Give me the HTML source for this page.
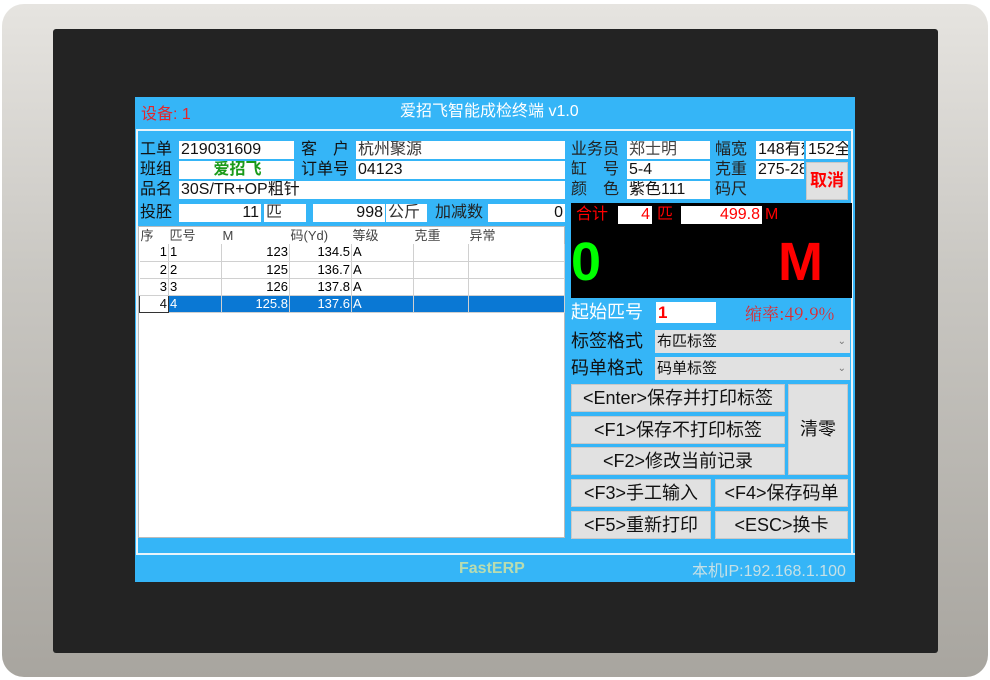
<!DOCTYPE html>
<html><head><meta charset="utf-8"><style>
*{margin:0;padding:0;box-sizing:border-box}
body{width:990px;height:680px;background:#fff;position:relative;overflow:hidden;font-family:"Liberation Sans","Noto Sans CJK SC",sans-serif}
.a{position:absolute}
.bz{left:2px;top:4px;width:986px;height:673px;border-radius:22px;background:linear-gradient(#e6e4e0,#c9c7c2 40%,#a8a59f);}
.blk{left:53px;top:29px;width:885px;height:624px;background:#232323;border-radius:3px}
.blue{background:#35b5f7}
.t{font-size:16px;line-height:18px;color:#111;white-space:nowrap}
.f{background:#fff;font-size:16px;line-height:18px;color:#111;padding-left:2px;white-space:nowrap;overflow:hidden}
.r{text-align:right;padding-right:2px}
.btn{background:#e1e1e1;border:1px solid #c8c8c8;font-size:18px;color:#111;text-align:center;white-space:nowrap}
table{border-collapse:collapse;font-size:13px}
td{border-right:1px solid #d0d0d0;border-bottom:1px solid #d0d0d0;height:17px;padding:0 1px;white-space:nowrap;line-height:16px}
</style></head><body>
<div class="a bz"></div>
<div class="a blk"></div>
<div class="a blue" style="left:135px;top:97px;width:720px;height:485px"></div>
<div class="a t" style="left:141px;top:106px;color:#e5262a;font-size:16px">设备: 1</div>
<div class="a t" style="left:400px;top:103px;color:#fff;font-size:16px">爱招飞智能成检终端 v1.0</div>
<div class="a" style="left:136px;top:129px;width:717px;height:426px;border:2px solid #e8f4fb;border-right:0"></div>
<div class="a" style="left:136px;top:553px;width:719px;height:2px;background:#e8f4fb"></div>
<div class="a" style="left:851px;top:129px;width:2px;height:426px;background:#e8f4fb"></div>

<div class="a t" style="left:140px;top:141px">工单</div>
<div class="a f" style="left:179px;top:141px;width:115px">219031609</div>
<div class="a t" style="left:301px;top:141px">客　户</div>
<div class="a f" style="left:356px;top:141px;width:209px;color:#333">杭州聚源</div>
<div class="a t" style="left:140px;top:161px">班组</div>
<div class="a f" style="left:179px;top:161px;width:115px;color:#1a9a1a;font-weight:bold;text-align:center">爱招飞</div>
<div class="a t" style="left:301px;top:161px">订单号</div>
<div class="a f" style="left:356px;top:161px;width:209px">04123</div>
<div class="a t" style="left:140px;top:181px">品名</div>
<div class="a f" style="left:179px;top:181px;width:386px">30S/TR+OP粗针</div>
<div class="a t" style="left:140px;top:204px">投胚</div>
<div class="a f r" style="left:179px;top:204px;width:82px">11</div>
<div class="a f" style="left:264px;top:204px;width:42px;color:#333">匹</div>
<div class="a f r" style="left:313px;top:204px;width:72px">998</div>
<div class="a f" style="left:386px;top:204px;width:41px;color:#333">公斤</div>
<div class="a t" style="left:435px;top:204px;color:#222">加减数</div>
<div class="a f r" style="left:488px;top:204px;width:77px">0</div>

<div class="a" style="left:138px;top:226px;width:427px;height:312px;background:#fff;border:1px solid #bbb">
<table style="width:426px">
<tr style="color:#444"><td style="width:29px;border:0">序</td><td style="width:53px;border:0">匹号</td><td style="width:68px;border:0">M</td><td style="width:62px;border:0">码(Yd)</td><td style="width:62px;border:0">等级</td><td style="width:55px;border:0">克重</td><td style="border:0">异常</td></tr>
<tr><td style="text-align:right">1</td><td>1</td><td style="text-align:right">123</td><td style="text-align:right">134.5</td><td>A</td><td></td><td></td></tr>
<tr><td style="text-align:right">2</td><td>2</td><td style="text-align:right">125</td><td style="text-align:right">136.7</td><td>A</td><td></td><td></td></tr>
<tr><td style="text-align:right">3</td><td>3</td><td style="text-align:right">126</td><td style="text-align:right">137.8</td><td>A</td><td></td><td></td></tr>
<tr style="background:#0a78d4;color:#fff"><td style="text-align:right;background:#fff;color:#111;border:1px solid #333">4</td><td>4</td><td style="text-align:right">125.8</td><td style="text-align:right">137.6</td><td>A</td><td></td><td></td></tr>
</table></div>

<div class="a t" style="left:571px;top:141px;color:#222">业务员</div>
<div class="a f" style="left:627px;top:141px;width:83px;color:#444">郑士明</div>
<div class="a t" style="left:715px;top:141px;color:#222">幅宽</div>
<div class="a f" style="left:756px;top:141px;width:48px">148有效</div>
<div class="a f" style="left:806px;top:141px;width:42px">152全</div>
<div class="a t" style="left:571px;top:161px;color:#222">缸　号</div>
<div class="a f" style="left:627px;top:161px;width:83px">5-4</div>
<div class="a t" style="left:715px;top:161px;color:#222">克重</div>
<div class="a f" style="left:756px;top:161px;width:48px">275-285</div>
<div class="a btn" style="left:806px;top:162px;width:42px;height:38px;color:#f00;font-weight:bold;line-height:36px;font-size:17px">取消</div>
<div class="a t" style="left:571px;top:181px;color:#222">颜　色</div>
<div class="a f" style="left:627px;top:181px;width:83px">紫色111</div>
<div class="a t" style="left:715px;top:181px;color:#222">码尺</div>
<div class="a f" style="left:756px;top:181px;width:48px"></div>

<div class="a" style="left:571px;top:203px;width:281px;height:95px;background:#000"></div>
<div class="a t" style="left:576px;top:206px;color:#f00">合计</div>
<div class="a f r" style="left:618px;top:206px;width:34px;color:#f00">4</div>
<div class="a t" style="left:657px;top:206px;color:#f00">匹</div>
<div class="a f r" style="left:681px;top:206px;width:81px;color:#f00">499.8</div>
<div class="a t" style="left:765px;top:206px;color:#f00">M</div>
<div class="a" style="left:571px;top:232px;font-size:54px;font-weight:bold;color:#0f0;line-height:60px">0</div>
<div class="a" style="left:778px;top:232px;font-size:54px;font-weight:bold;color:#f00;line-height:60px">M</div>

<div class="a t" style="left:571px;top:302px;color:#fff;font-size:18px;line-height:21px">起始匹号</div>
<div class="a f" style="left:656px;top:302px;width:60px;height:21px;color:#f00;font-weight:bold;font-size:17px;line-height:21px">1</div>
<div class="a t" style="left:745px;top:302px;color:#e5262a;font-size:17px;line-height:21px;font-family:'Noto Serif CJK SC','Liberation Serif',serif">缩率:49.9%</div>

<div class="a t" style="left:571px;top:331px;font-size:18px;line-height:21px">标签格式</div>
<div class="a f" style="left:655px;top:330px;width:195px;height:23px;background:#e1e1e1;line-height:23px;font-size:15px">布匹标签<span style="position:absolute;right:4px;font-size:10px;color:#777">⌄</span></div>
<div class="a t" style="left:571px;top:358px;font-size:18px;line-height:21px">码单格式</div>
<div class="a f" style="left:655px;top:357px;width:195px;height:23px;background:#e1e1e1;line-height:23px;font-size:15px">码单标签<span style="position:absolute;right:4px;font-size:10px;color:#777">⌄</span></div>

<div class="a btn" style="left:571px;top:384px;width:214px;height:28px;line-height:26px">&lt;Enter&gt;保存并打印标签</div>
<div class="a btn" style="left:571px;top:416px;width:214px;height:28px;line-height:26px">&lt;F1&gt;保存不打印标签</div>
<div class="a btn" style="left:571px;top:447px;width:214px;height:28px;line-height:26px">&lt;F2&gt;修改当前记录</div>
<div class="a btn" style="left:788px;top:384px;width:60px;height:91px;line-height:89px">清零</div>
<div class="a btn" style="left:571px;top:479px;width:140px;height:28px;line-height:26px">&lt;F3&gt;手工输入</div>
<div class="a btn" style="left:715px;top:479px;width:133px;height:28px;line-height:26px">&lt;F4&gt;保存码单</div>
<div class="a btn" style="left:571px;top:511px;width:140px;height:28px;line-height:26px">&lt;F5&gt;重新打印</div>
<div class="a btn" style="left:715px;top:511px;width:133px;height:28px;line-height:26px">&lt;ESC&gt;换卡</div>

<div class="a t" style="left:459px;top:560px;color:#b8dcb0;font-weight:bold;font-size:16px">FastERP</div>
<div class="a t" style="left:692px;top:563px;color:#c4e0e6;font-size:16px">本机IP:192.168.1.100</div>
</body></html>
